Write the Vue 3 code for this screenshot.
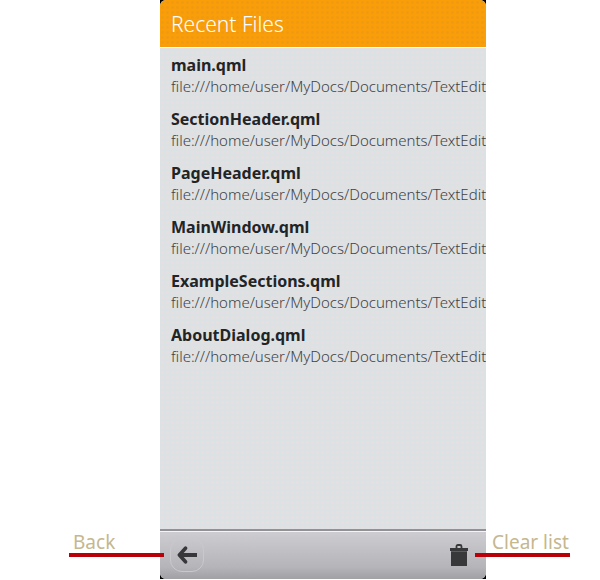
<script setup>
import { ref } from 'vue'

const path = 'file:///home/user/MyDocs/Documents/TextEditor/'
const files = ref([
  'main.qml',
  'SectionHeader.qml',
  'PageHeader.qml',
  'MainWindow.qml',
  'ExampleSections.qml',
  'AboutDialog.qml',
])
</script>

<template>
  <div class="figure">
    <main class="phone">
      <div class="screen">
        <header class="header"><h1>Recent Files</h1></header>
        <ul class="list">
          <li v-for="name in files" :key="name" class="item">
            <strong class="name">{{ name }}</strong>
            <span class="path">{{ path }}</span>
          </li>
        </ul>
        <footer class="toolbar">
          <button class="tool back" type="button" aria-label="Back">
            <svg width="20" height="18" viewBox="0 0 20 18" aria-hidden="true">
              <path d="M8.500 2.200 2.400 9 8.500 15.800" fill="none" stroke="#38383b" stroke-width="3.600" stroke-linecap="round" stroke-linejoin="round" />
              <path d="M3 9H20" stroke="#38383b" stroke-width="3.800" />
            </svg>
          </button>
          <button class="tool" type="button" aria-label="Clear list" @click="files = []">
            <svg width="18" height="22" viewBox="0 0 18 22" aria-hidden="true">
              <path d="M6.500 4.500V2.500Q6.500 1 8 1H10Q11.500 1 11.500 2.500V4.500" fill="none" stroke="#38383b" stroke-width="1.800" />
              <path d="M0 4H18V7H0ZM1 7H17V22H1Z" fill="#38383b" />
              <path d="M1 7.500H17" stroke="#5c5c60" stroke-width="1" />
            </svg>
          </button>
        </footer>
      </div>
      <div class="callout callout-left">Back</div>
      <div class="callout callout-right">Clear list</div>
    </main>
  </div>
</template>

<style>
body {
  margin: 0;
  background: #fff;
}
</style>

<style scoped>
.figure {
  display: grid;
  grid-template-columns: 160fr 326fr 114fr;
  min-height: 100vh;
  padding-bottom: 1px;
  box-sizing: border-box;
  font-family: "Noto Sans", "Open Sans", sans-serif;
}
.phone {
  grid-column: 2;
  position: relative;
  display: flex;
  min-width: 0;
  background: #000;
}
.screen {
  flex: 1;
  display: flex;
  flex-direction: column;
  min-width: 0;
  overflow: hidden;
  border-radius: 6px;
  background: radial-gradient(circle, #e5dfe1 1px, transparent 2px) 0 0 / 5px 5px #dce1e3;
}
.header {
  height: 47px;
  padding: 0 11px;
  display: flex;
  align-items: center;
  background: radial-gradient(circle, #f09a12 1px, transparent 2px) 0 0 / 5px 5px #f99d09;
  border-bottom: 1px solid #fff;
}
h1 {
  margin: 0;
  font-size: 21px;
  line-height: 28px;
  font-weight: 300;
  color: #fff;
}
.list {
  flex: 1;
  margin: 0;
  padding: 6px 0 0 11px;
  list-style: none;
}
.item {
  height: 54px;
  overflow: hidden;
  white-space: nowrap;
}
.name,
.path {
  display: block;
  line-height: 22px;
}
.name {
  font-size: 16px;
  font-weight: 700;
  color: #222426;
}
.path {
  font-size: 15px;
  font-weight: 300;
  line-height: 20px;
  color: #404244;
}
.toolbar {
  display: flex;
  align-items: center;
  justify-content: space-between;
  height: 47px;
  padding: 0 10px;
  border-top: 1px solid #f4f4f5;
  box-shadow: 0 -2px 0 #929296;
  background: linear-gradient(#cdccd0, #b5b5b9 75%, #a0a0a5);
}
.tool {
  display: flex;
  align-items: center;
  justify-content: center;
  width: 34px;
  height: 34px;
  margin-bottom: 2px;
  padding: 0;
  border: 0;
  background: none;
}
.back {
  border: 1px solid #c9c9cd;
  border-radius: 12px;
}
.callout {
  position: absolute;
  bottom: 22px;
  width: 95px;
  box-sizing: border-box;
  border-bottom: 4px solid #b90008;
  color: #c5b78e;
  font-size: 19px;
  line-height: 22px;
  white-space: nowrap;
}
.callout-left {
  right: calc(100% - 4px);
  padding-left: 4px;
}
.callout-right {
  left: calc(100% - 11px);
  padding-left: 17px;
}
</style>
